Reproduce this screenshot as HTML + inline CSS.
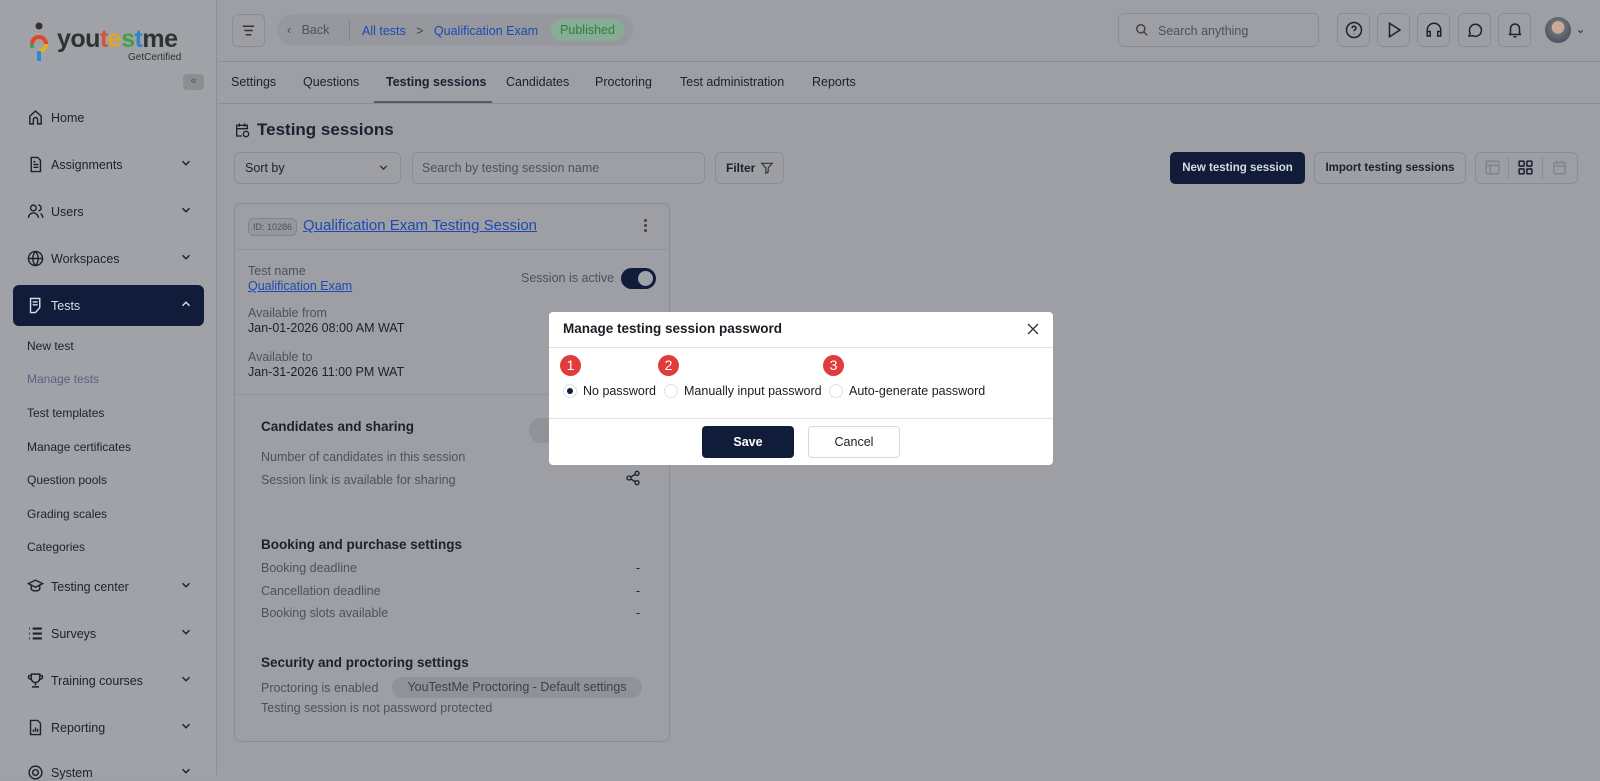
<!DOCTYPE html>
<html><head><meta charset="utf-8"><style>
*{box-sizing:border-box;margin:0;padding:0}
body{width:1600px;height:775px;overflow:hidden;background:#9d9fa4;font-family:"Liberation Sans",sans-serif;color:#1c2130;position:relative;font-size:12.5px}
.a{position:absolute;white-space:nowrap}
.sb{position:absolute;left:0;top:0;width:217px;height:775px;background:#a0a2a7;border-right:1px solid #8d8f94}
.nav{position:absolute;left:27px;font-size:12.5px;color:#1c2130}
.nav svg{position:absolute;left:0;top:-2px}
.nav span{position:absolute;left:24px;top:0;white-space:nowrap}
.chev{position:absolute;left:179px;top:-1px}
.sub{position:absolute;left:27px;font-size:12px;color:#1c2130}
.btn{position:absolute;border:1px solid #8b8d92;border-radius:6px}
.tab{position:absolute;top:75px;font-size:12.5px;color:#1c2130}
.gray{color:#4b5160}
</style></head><body>
<div class="sb"></div>
<svg class="a" style="left:28px;top:22px" width="22" height="42" viewBox="0 0 22 42"><circle cx="11" cy="4" r="3.5" fill="#333"/><path d="M4 22a7 7 0 1 1 14 0" stroke="#e0472a" stroke-width="4" fill="none"/><path d="M18 22a7 7 0 0 1-7 7" stroke="#e2b020" stroke-width="4" fill="none"/><path d="M11 29v10" stroke="#2a8ad6" stroke-width="4"/><path d="M4 22v4" stroke="#3aa55a" stroke-width="4"/></svg>
<div class="a" style="left:57px;top:25px;font-size:25px;font-weight:bold;color:#2f3135;letter-spacing:-0.5px">you<span style="color:#d2533a">t</span><span style="color:#e2a623">e</span><span style="color:#43a048">s</span><span style="color:#2a86c8">t</span>me</div>
<div class="a" style="left:128px;top:52px;font-size:10px;color:#2f3135">GetCertified</div>
<div class="a" style="left:183px;top:74px;width:21px;height:16px;background:#8c8e93;border-radius:4px;color:#555;font-size:11px;text-align:center;line-height:15px">«</div>

<div class="nav" style="top:111px"><svg width="17" height="17" viewBox="0 0 24 24" fill="none" stroke="#1c2130" stroke-width="2"><path d="M4 21V10l8-7 8 7v11h-5v-6a3 3 0 0 0-6 0v6z"/></svg><span>Home</span></div>
<div class="nav" style="top:158px"><svg width="17" height="17" viewBox="0 0 24 24" fill="none" stroke="#1c2130" stroke-width="2"><path d="M6 2h9l4 4v16H6z M9 12h7 M9 16h7 M9 8h3"/></svg><span>Assignments</span><svg class="chev" style="left:152px" width="14" height="14" viewBox="0 0 24 24" fill="none" stroke="#1c2130" stroke-width="2.5"><path d="M6 9l6 6 6-6"/></svg></div>
<div class="nav" style="top:205px"><svg width="17" height="17" viewBox="0 0 24 24" fill="none" stroke="#1c2130" stroke-width="2"><circle cx="9" cy="7" r="4"/><path d="M2 21a7 7 0 0 1 14 0 M16 3a4 4 0 0 1 0 8 M19 15a6 6 0 0 1 3 6"/></svg><span>Users</span><svg class="chev" style="left:152px" width="14" height="14" viewBox="0 0 24 24" fill="none" stroke="#1c2130" stroke-width="2.5"><path d="M6 9l6 6 6-6"/></svg></div>
<div class="nav" style="top:252px"><svg width="17" height="17" viewBox="0 0 24 24" fill="none" stroke="#1c2130" stroke-width="2"><circle cx="12" cy="12" r="10"/><path d="M2 12h20 M12 2a15 15 0 0 1 0 20 M12 2a15 15 0 0 0 0 20"/></svg><span>Workspaces</span><svg class="chev" style="left:152px" width="14" height="14" viewBox="0 0 24 24" fill="none" stroke="#1c2130" stroke-width="2.5"><path d="M6 9l6 6 6-6"/></svg></div>
<div class="a" style="left:13px;top:285px;width:191px;height:41px;background:#111c3b;border-radius:6px"></div>
<div class="nav" style="top:299px;color:#d8dbe2"><svg width="17" height="17" viewBox="0 0 24 24" fill="none" stroke="#d8dbe2" stroke-width="2"><path d="M5 2h13v13l-6 7H5z M8 7h7 M8 11h7"/></svg><span>Tests</span><svg class="chev" style="left:152px" width="14" height="14" viewBox="0 0 24 24" fill="none" stroke="#d8dbe2" stroke-width="2.5"><path d="M6 15l6-6 6 6"/></svg></div>
<div class="sub" style="top:339px">New test</div>
<div class="sub" style="top:372px;color:#5a6180">Manage tests</div>
<div class="sub" style="top:406px">Test templates</div>
<div class="sub" style="top:440px">Manage certificates</div>
<div class="sub" style="top:473px">Question pools</div>
<div class="sub" style="top:507px">Grading scales</div>
<div class="sub" style="top:540px">Categories</div>
<div class="nav" style="top:580px"><svg width="17" height="17" viewBox="0 0 24 24" fill="none" stroke="#1c2130" stroke-width="2"><path d="M2 8l10-5 10 5-10 5z M6 10v6c3 3 9 3 12 0v-6"/></svg><span>Testing center</span><svg class="chev" style="left:152px" width="14" height="14" viewBox="0 0 24 24" fill="none" stroke="#1c2130" stroke-width="2.5"><path d="M6 9l6 6 6-6"/></svg></div>
<div class="nav" style="top:627px"><svg width="17" height="17" viewBox="0 0 24 24" fill="none" stroke="#1c2130" stroke-width="3"><path d="M3 5h1 M8 5h13 M3 12h1 M8 12h13 M3 19h1 M8 19h13"/></svg><span>Surveys</span><svg class="chev" style="left:152px" width="14" height="14" viewBox="0 0 24 24" fill="none" stroke="#1c2130" stroke-width="2.5"><path d="M6 9l6 6 6-6"/></svg></div>
<div class="nav" style="top:674px"><svg width="17" height="17" viewBox="0 0 24 24" fill="none" stroke="#1c2130" stroke-width="2"><path d="M6 3h12v6a6 6 0 0 1-12 0z M6 5H3a3 3 0 0 0 3 5 M18 5h3a3 3 0 0 1-3 5 M12 15v4 M7 21h10"/></svg><span>Training courses</span><svg class="chev" style="left:152px" width="14" height="14" viewBox="0 0 24 24" fill="none" stroke="#1c2130" stroke-width="2.5"><path d="M6 9l6 6 6-6"/></svg></div>
<div class="nav" style="top:721px"><svg width="17" height="17" viewBox="0 0 24 24" fill="none" stroke="#1c2130" stroke-width="2"><path d="M5 2h10l4 4v16H5z M9 18v-3 M12 18v-6 M15 18v-4"/></svg><span>Reporting</span><svg class="chev" style="left:152px" width="14" height="14" viewBox="0 0 24 24" fill="none" stroke="#1c2130" stroke-width="2.5"><path d="M6 9l6 6 6-6"/></svg></div>
<div class="nav" style="top:766px"><svg width="17" height="17" viewBox="0 0 24 24" fill="none" stroke="#1c2130" stroke-width="2"><circle cx="12" cy="12" r="4"/><circle cx="12" cy="12" r="9"/></svg><span>System</span><svg class="chev" style="left:152px" width="14" height="14" viewBox="0 0 24 24" fill="none" stroke="#1c2130" stroke-width="2.5"><path d="M6 9l6 6 6-6"/></svg></div>

<div class="a" style="left:218px;top:61px;width:1382px;height:1px;background:#8b8d92"></div>
<div class="a" style="left:218px;top:103px;width:1382px;height:1px;background:#8b8d92"></div>
<div class="btn" style="left:232px;top:14px;width:33px;height:33px"></div>
<svg class="a" style="left:240px;top:22px" width="17" height="17" viewBox="0 0 24 24" stroke="#333" stroke-width="2"><path d="M4 6h16 M6 12h12 M8 18h8"/></svg>
<div class="a" style="left:277px;top:14px;width:356px;height:32px;background:#96989d;border-radius:16px"></div>
<div class="a gray" style="left:287px;top:23px">‹&nbsp;&nbsp;&nbsp;Back</div>
<div class="a" style="left:349px;top:20px;width:1px;height:21px;background:#82848a"></div>
<div class="a" style="left:362px;top:24px;color:#1d4ab0">All tests&nbsp;&nbsp;&nbsp;<span style="color:#444">&gt;</span>&nbsp;&nbsp;&nbsp;Qualification Exam</div>
<div class="a" style="left:551px;top:19px;width:73px;height:22px;background:#88ad96;border-radius:11px;color:#2e7d3e;text-align:center;line-height:22px">Published</div>
<div class="btn" style="left:1118px;top:13px;width:201px;height:34px"></div>
<svg class="a" style="left:1135px;top:23px" width="14" height="14" viewBox="0 0 24 24" fill="none" stroke="#444" stroke-width="2.5"><circle cx="10" cy="10" r="7"/><path d="M15 15l6 6"/></svg>
<div class="a gray" style="left:1158px;top:24px">Search anything</div>
<div class="btn" style="left:1337px;top:13px;width:33px;height:34px"></div>
<div class="btn" style="left:1377px;top:13px;width:33px;height:34px"></div>
<div class="btn" style="left:1417px;top:13px;width:33px;height:34px"></div>
<div class="btn" style="left:1458px;top:13px;width:33px;height:34px"></div>
<div class="btn" style="left:1498px;top:13px;width:33px;height:34px"></div>
<svg class="a" style="left:1345px;top:21px" width="18" height="18" viewBox="0 0 24 24" fill="none" stroke="#1c2130" stroke-width="2"><circle cx="12" cy="12" r="10"/><path d="M9.5 9.5a2.5 2.5 0 1 1 3.5 2.3c-.7.4-1 .9-1 1.7 M12 17v.5"/></svg>
<svg class="a" style="left:1385px;top:21px" width="18" height="18" viewBox="0 0 24 24" fill="none" stroke="#1c2130" stroke-width="2"><path d="M6 3l14 9-14 9z"/></svg>
<svg class="a" style="left:1425px;top:21px" width="18" height="18" viewBox="0 0 24 24" fill="none" stroke="#1c2130" stroke-width="2"><path d="M3 18v-6a9 9 0 0 1 18 0v6 M3 14h4v6H3z M17 14h4v6h-4z"/></svg>
<svg class="a" style="left:1466px;top:21px" width="18" height="18" viewBox="0 0 24 24" fill="none" stroke="#1c2130" stroke-width="2"><path d="M4 20l1.5-4A8 8 0 1 1 9 19.5z"/></svg>
<svg class="a" style="left:1506px;top:21px" width="18" height="18" viewBox="0 0 24 24" fill="none" stroke="#1c2130" stroke-width="2"><path d="M6 17V10a6 6 0 0 1 12 0v7l2 1H4z M10 21h4"/></svg>
<div class="a" style="left:1545px;top:17px;width:26px;height:26px;border-radius:50%;background:radial-gradient(circle at 50% 40%,#c9a99a 0 30%,#6d7078 32%,#3c4050 100%)"></div>
<svg class="a" style="left:1576px;top:27px" width="9" height="9" viewBox="0 0 24 24" fill="none" stroke="#333" stroke-width="3"><path d="M6 9l6 6 6-6"/></svg>

<div class="tab" style="left:231px">Settings</div>
<div class="tab" style="left:303px">Questions</div>
<div class="tab" style="left:386px;font-weight:bold">Testing sessions</div>
<div class="a" style="left:374px;top:101px;width:118px;height:2px;background:#555a6b"></div>
<div class="tab" style="left:506px">Candidates</div>
<div class="tab" style="left:595px">Proctoring</div>
<div class="tab" style="left:680px">Test administration</div>
<div class="tab" style="left:812px">Reports</div>

<svg class="a" style="left:234px;top:122px" width="16" height="16" viewBox="0 0 24 24" fill="none" stroke="#1c2130" stroke-width="2"><path d="M12 21H4V5h16v6 M4 10h16 M8 2v5 M16 2v5"/><circle cx="18" cy="18" r="4"/></svg>
<div class="a" style="left:257px;top:120px;font-size:17px;font-weight:bold">Testing sessions</div>
<div class="btn" style="left:234px;top:152px;width:167px;height:32px"></div>
<div class="a" style="left:245px;top:161px">Sort by</div>
<svg class="a" style="left:377px;top:161px" width="13" height="13" viewBox="0 0 24 24" fill="none" stroke="#333" stroke-width="2.5"><path d="M6 9l6 6 6-6"/></svg>
<div class="btn" style="left:412px;top:152px;width:293px;height:32px"></div>
<div class="a gray" style="left:422px;top:161px">Search by testing session name</div>
<div class="btn" style="left:715px;top:152px;width:69px;height:32px"></div>
<div class="a" style="left:726px;top:161px;font-weight:bold;font-size:12px">Filter</div>
<svg class="a" style="left:760px;top:161px" width="14" height="14" viewBox="0 0 24 24" fill="none" stroke="#333" stroke-width="2"><path d="M3 4h18l-7 8v7l-4 2v-9z"/></svg>
<div class="a" style="left:1170px;top:152px;width:135px;height:32px;background:#111c3b;border-radius:5px;color:#d8dbe2;font-weight:bold;font-size:11.5px;text-align:center;line-height:32px">New testing session</div>
<div class="btn" style="left:1314px;top:152px;width:152px;height:32px;text-align:center;line-height:30px;font-weight:bold;font-size:11.5px">Import testing sessions</div>
<div class="btn" style="left:1475px;top:152px;width:103px;height:32px"></div>
<div class="a" style="left:1508px;top:157px;width:1px;height:22px;background:#8b8d92"></div>
<div class="a" style="left:1542px;top:157px;width:1px;height:22px;background:#8b8d92"></div>
<svg class="a" style="left:1484px;top:159px" width="17" height="17" viewBox="0 0 24 24" fill="none" stroke="#82848a" stroke-width="2"><rect x="3" y="3" width="18" height="18" rx="2"/><path d="M3 9h18 M9 9v12"/></svg>
<svg class="a" style="left:1517px;top:159px" width="17" height="17" viewBox="0 0 24 24" fill="none" stroke="#1c2130" stroke-width="2.2"><rect x="3" y="3" width="7" height="7" rx="1"/><rect x="14" y="3" width="7" height="7" rx="1"/><rect x="3" y="14" width="7" height="7" rx="1"/><rect x="14" y="14" width="7" height="7" rx="1"/></svg>
<svg class="a" style="left:1551px;top:159px" width="17" height="17" viewBox="0 0 24 24" fill="none" stroke="#82848a" stroke-width="2"><rect x="4" y="5" width="16" height="16" rx="2"/><path d="M4 10h16 M8 2v5 M16 2v5"/></svg>

<div class="a" style="left:234px;top:203px;width:436px;height:539px;border:1px solid #8b8d92;border-radius:7px"></div>
<div class="a" style="left:235px;top:249px;width:434px;height:1px;background:#909297"></div>
<div class="a" style="left:235px;top:394px;width:434px;height:1px;background:#909297"></div>
<div class="a" style="left:248px;top:218px;width:49px;height:18px;border:1px solid #82848a;border-radius:6px;font-size:9px;color:#4b5160;text-align:center;line-height:16px;background:#96989d">ID: 10286</div>
<div class="a" style="left:303px;top:217px;font-size:15px;color:#1d4ab0;text-decoration:underline">Qualification Exam Testing Session</div>
<div class="a" style="left:644px;top:219px;width:3px;height:3px;border-radius:50%;background:#444;box-shadow:0 5px 0 #444,0 10px 0 #444"></div>
<div class="a gray" style="left:248px;top:264px">Test name</div>
<div class="a" style="left:248px;top:279px;color:#1d4ab0;text-decoration:underline">Qualification Exam</div>
<div class="a gray" style="left:521px;top:271px">Session is active</div>
<div class="a" style="left:621px;top:268px;width:35px;height:21px;border-radius:11px;background:#111c3b"></div>
<div class="a" style="left:638px;top:271px;width:15px;height:15px;border-radius:50%;background:#a0a2a7"></div>
<div class="a gray" style="left:248px;top:306px">Available from</div>
<div class="a" style="left:248px;top:321px">Jan-01-2026 08:00 AM WAT</div>
<div class="a gray" style="left:248px;top:350px">Available to</div>
<div class="a" style="left:248px;top:365px">Jan-31-2026 11:00 PM WAT</div>
<div class="a" style="left:261px;top:419px;font-weight:bold;font-size:13.5px">Candidates and sharing</div>
<div class="a" style="left:529px;top:418px;width:40px;height:25px;border-radius:12px;background:#909297"></div>
<div class="a gray" style="left:261px;top:450px">Number of candidates in this session</div>
<div class="a gray" style="left:261px;top:473px">Session link is available for sharing</div>
<svg class="a" style="left:625px;top:470px" width="16" height="16" viewBox="0 0 24 24" fill="none" stroke="#1c2130" stroke-width="2"><circle cx="18" cy="5" r="3"/><circle cx="6" cy="12" r="3"/><circle cx="18" cy="19" r="3"/><path d="M8.6 13.5l6.8 4 M15.4 6.5l-6.8 4"/></svg>
<div class="a" style="left:261px;top:537px;font-weight:bold;font-size:13.5px">Booking and purchase settings</div>
<div class="a gray" style="left:261px;top:561px">Booking deadline</div>
<div class="a gray" style="left:261px;top:584px">Cancellation deadline</div>
<div class="a gray" style="left:261px;top:606px">Booking slots available</div>
<div class="a" style="left:636px;top:561px">-</div><div class="a" style="left:636px;top:584px">-</div><div class="a" style="left:636px;top:606px">-</div>
<div class="a" style="left:261px;top:655px;font-weight:bold;font-size:13.5px">Security and proctoring settings</div>
<div class="a gray" style="left:261px;top:681px">Proctoring is enabled</div>
<div class="a" style="left:392px;top:677px;width:250px;height:21px;border-radius:11px;background:#909297;text-align:center;line-height:21px;color:#3b4050">YouTestMe Proctoring - Default settings</div>
<div class="a gray" style="left:261px;top:701px">Testing session is not password protected</div>

<div class="a" style="left:549px;top:312px;width:504px;height:153px;background:#fff;border-radius:4px"></div>
<div class="a" style="left:549px;top:347px;width:504px;height:1px;background:#e2e4e8"></div>
<div class="a" style="left:549px;top:418px;width:504px;height:1px;background:#e2e4e8"></div>
<div class="a" style="left:563px;top:321px;font-weight:bold;font-size:13.5px;color:#1a1d24">Manage testing session password</div>
<svg class="a" style="left:1027px;top:323px" width="12" height="12" viewBox="0 0 12 12" stroke="#333" stroke-width="1.3"><path d="M1 1l10 10 M11 1L1 11"/></svg>
<div class="a" style="left:560px;top:355px;width:21px;height:21px;border-radius:50%;background:#e03c3c;color:#fff;font-size:14px;text-align:center;line-height:21px">1</div>
<div class="a" style="left:658px;top:355px;width:21px;height:21px;border-radius:50%;background:#e03c3c;color:#fff;font-size:14px;text-align:center;line-height:21px">2</div>
<div class="a" style="left:823px;top:355px;width:21px;height:21px;border-radius:50%;background:#e03c3c;color:#fff;font-size:14px;text-align:center;line-height:21px">3</div>
<div class="a" style="left:563px;top:384px;width:14px;height:14px;border-radius:50%;border:1px solid #dfe1e5"></div>
<div class="a" style="left:567px;top:388px;width:6px;height:6px;border-radius:50%;background:#111c3b"></div>
<div class="a" style="left:583px;top:384px;font-size:12.5px;color:#1a1d24">No password</div>
<div class="a" style="left:664px;top:384px;width:14px;height:14px;border-radius:50%;border:1px solid #dfe1e5"></div>
<div class="a" style="left:684px;top:384px;font-size:12.5px;color:#1a1d24">Manually input password</div>
<div class="a" style="left:829px;top:384px;width:14px;height:14px;border-radius:50%;border:1px solid #dfe1e5"></div>
<div class="a" style="left:849px;top:384px;font-size:12.5px;color:#1a1d24">Auto-generate password</div>
<div class="a" style="left:702px;top:426px;width:92px;height:32px;background:#111c3b;border-radius:4px;color:#fff;font-weight:bold;text-align:center;line-height:32px">Save</div>
<div class="a" style="left:808px;top:426px;width:92px;height:32px;border:1px solid #d6d8dc;border-radius:4px;color:#1a1d24;text-align:center;line-height:30px">Cancel</div>
</body></html>
